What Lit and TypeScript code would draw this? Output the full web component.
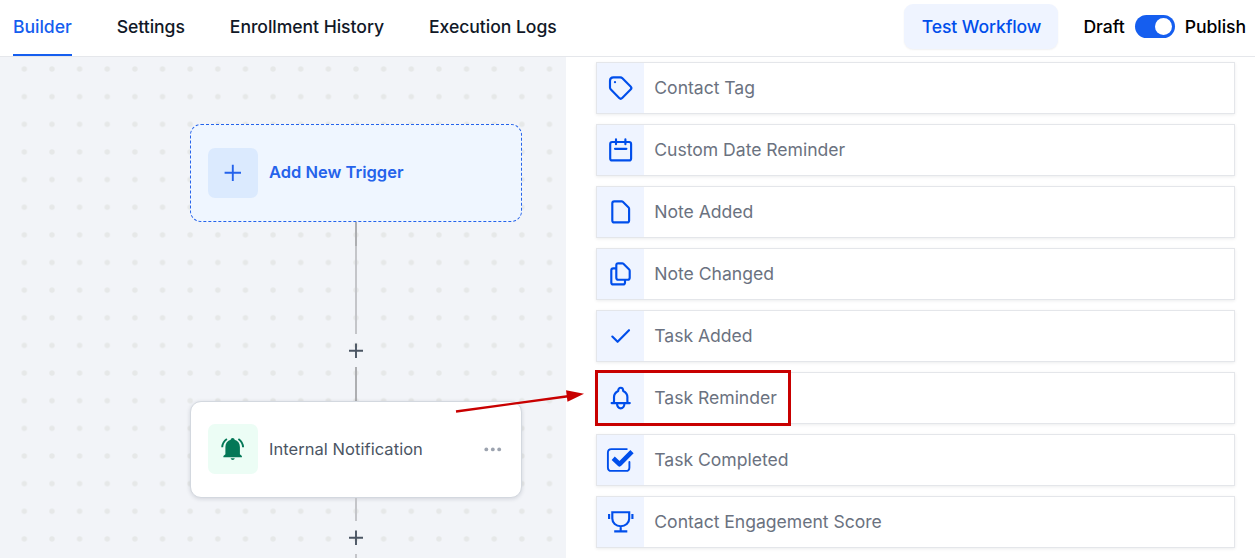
import { LitElement, html, svg, css } from "lit";
import { customElement, property } from "lit/decorators.js";

const ICONS: Record<string, unknown> = {
  tag: svg`<path d="M16.5 14.3H23.3q1.2 0 2.1.9L33.6 23.4q1.6 1.6 0 3.2L25.2 35q-1.5 1.5-3 0L13.9 26.6q-.9-.9-.9-2.1V17.8q0-3.5 3.5-3.5Z"/><circle cx="18" cy="19.2" r="1.1" fill="currentColor" stroke="none"/>`,
  calendar: svg`<rect x="13.2" y="17" width="20.9" height="18.4" rx="2"/><path d="M19 14.4V19.2M28.4 14.4V19.2M18 23.8H29.4"/>`,
  note: svg`<path d="M17.3 14.3H24.6q.7 0 1.2.5L31.6 20.5q.5.5.5 1.2V33.4q0 2-2 2H17.3q-2 0-2-2V16.3q0-2 2-2Z"/>`,
  copy: svg`<path d="M21.3 14.3H25.2q.7 0 1.2.5L32.2 20.5q.5.5.5 1.2V28.7q0 2-2 2H21.3q-2 0-2-2V16.3q0-2 2-2ZM19.3 19.3H16.3q-2 0-2 2V33.4q0 2 2 2H26q2 0 2-2V30.7"/>`,
  check: svg`<path d="M15.3 25.6L20.6 30.8L32 19.2"/>`,
  bell: svg`<path d="M14.6 30.1H32.8M16.7 30C17.3 28.5 17 26.5 17 24.2C17 20.8 19.2 18.8 21.2 17.9C21.2 16 22.2 14.7 23.7 14.7C25.2 14.7 26.2 16 26.2 17.9C28.2 18.8 30.4 20.8 30.4 24.2C30.4 26.5 30.1 28.5 30.7 30M20 30.8a3.7 4.5 0 0 0 7.4 0"/>`,
  done: svg`<path d="M29.8 14.1H14.4Q10.9 14.1 10.9 17.6V32.4Q10.9 35.9 14.4 35.9H29Q32.4 35.9 32.4 32.4V27" stroke-width="1.9"/><path d="M16.2 23.3L22.6 29.2L35 16.6" stroke-width="4.6" stroke-linecap="butt"/>`,
  trophy: svg`<path d="M15.3 15.2H32.2V21.5C32.2 26 28.5 29.2 23.7 29.2S15.3 26 15.3 21.5ZM23.7 29.2V34M17.2 34.3H30.3" stroke-linecap="butt" stroke-linejoin="miter"/><path d="M12.1 17V22M35.4 17V22" stroke-linecap="butt"/>`,
};

@customElement("trigger-row")
class TriggerRow extends LitElement {
  @property() icon = "";
  @property() label = "";
  static styles = css`
    :host { display: flex; height: 50px; border: 1px solid #e4e6ea; background: #fff; box-shadow: 0 1px 3px rgba(16, 24, 40, 0.08); }
    .icon { flex: none; width: 47px; height: 50px; background: #eff4ff; color: #004eeb; }
    .label { padding-left: 10.3px; line-height: 50px; font-size: 17.6px; letter-spacing: -0.03px; color: #6b7280; white-space: nowrap; }
    svg { display: block; fill: none; stroke: currentColor; stroke-width: 2.15; stroke-linecap: round; stroke-linejoin: round; }
  `;
  render() {
    return html`<div class="icon"><svg width="47" height="50" viewBox="0 0 47 50">${ICONS[this.icon]}</svg></div>
      <div class="label">${this.label}</div>`;
  }
}

@customElement("app-root")
class AppRoot extends LitElement {
  static styles = css`
    * { box-sizing: border-box; }
    :host { display: flex; flex-direction: column; position: relative; width: 1255px; height: 558px; overflow: hidden; background: #fff; font-family: Inter, sans-serif; font-size: 17.6px; }
    header { display: flex; align-items: flex-start; flex: none; height: 57px; border-bottom: 1px solid #e5e7eb; padding: 0 9px 0 13px; font-weight: 500; color: #111827; white-space: nowrap; }
    nav { display: flex; gap: 45px; flex: 1; }
    .tab { height: 56px; line-height: 54px; letter-spacing: -0.05px; }
    .tab.active { color: #155eef; border-bottom: 2px solid #155eef; }
    .test { margin-top: 4px; width: 154px; height: 45px; line-height: 45px; text-align: center; letter-spacing: -0.1px; border-radius: 9px; background: #eff4ff; color: #004eeb; box-shadow: 0 1px 2px rgba(16, 24, 40, 0.06); }
    .state { display: flex; align-items: center; height: 53px; margin-left: 25px; gap: 10px; color: #000; letter-spacing: -0.05px; }
    .toggle { display: flex; justify-content: flex-end; width: 40px; height: 23px; border-radius: 12px; background: #155eef; padding: 3px 2.5px; }
    .knob { width: 17px; height: 17px; border-radius: 50%; background: #fff; }
    main { display: flex; flex: 1; min-height: 0; }
    .canvas { display: grid; grid-template: 501px / 566px; width: 566px; background-color: #f2f4f8; overflow: hidden; }
    .canvas > * { grid-area: 1 / 1; }
    .dots { display: block; }
    .flow { display: flex; flex-direction: column; align-items: center; padding: 67px 44px 0 190px; }
    .card { display: flex; align-items: center; flex: none; width: 332px; padding: 0 17px; border-radius: 11px; white-space: nowrap; font-size: 16.5px; }
    .add { height: 98px; border: 1px dashed #2563eb; background: #eff6ff; color: #2563eb; font-weight: 600; }
    .action { height: 97px; border: 1px solid #d3d8df; background: #fff; color: #4b5563; padding: 0 19.5px 2px 17px; box-shadow: 0 1px 4px rgba(16, 24, 40, 0.14); letter-spacing: 0.05px; }
    .badge { flex: none; width: 50px; height: 50px; border-radius: 7px; margin-right: 11px; }
    .badge svg { display: block; }
    .blue { background: #dbeafe; }
    .green { background: #ecfdf5; }
    .name { flex: 1; }
    .add .name { padding-bottom: 3px; }
    .line { flex: none; width: 2px; background: #c4c5c9; }
    .dark { background: #adaeb1; }
    .plus { flex: none; display: block; }
    .list { flex: 1; display: flex; flex-direction: column; gap: 10px; padding: 5px 20px 0 30px; }
    trigger-row { flex: none; height: 52px; }
    .note { position: absolute; left: 0; top: 0; }
  `;
  render() {
    const plus = html`<svg class="plus" width="34" height="33" viewBox="0 0 34 33"><path d="M17 9.5V24M10 16.7H24" stroke="#4b5563" stroke-width="1.9" fill="none" /></svg>`;
    const rows = [
      ["tag", "Contact Tag"], ["calendar", "Custom Date Reminder"], ["note", "Note Added"], ["copy", "Note Changed"],
      ["check", "Task Added"], ["bell", "Task Reminder"], ["done", "Task Completed"], ["trophy", "Contact Engagement Score"],
    ];
    return html`
      <header>
        <nav>
          <div class="tab active">Builder</div>
          <div class="tab">Settings</div>
          <div class="tab">Enrollment History</div>
          <div class="tab">Execution Logs</div>
        </nav>
        <div class="test">Test Workflow</div>
        <div class="state"><span>Draft</span><div class="toggle"><div class="knob"></div></div><span>Publish</span></div>
      </header>
      <main>
        <div class="canvas">
          <svg class="dots" width="566" height="501">
            <defs><pattern id="grid" x="10.5" y="-1.8" width="27.64" height="27.64" patternUnits="userSpaceOnUse"><circle cx="13.82" cy="13.82" r="2.7" fill="#e6e8e8" /></pattern></defs>
            <rect width="566" height="501" fill="url(#grid)" />
          </svg>
          <div class="flow">
            <div class="card add">
              <div class="badge blue"><svg width="50" height="50"><path d="M24.8 16.7V33M16.6 24.8H33" stroke="#2563eb" stroke-width="1.9" /></svg></div>
              <div class="name">Add New Trigger</div>
            </div>
            <div class="line dark" style="height:24px"></div>
            <div class="line" style="height:88px"></div>
            ${plus}
            <div class="line dark" style="height:34px"></div>
            <div class="card action">
              <div class="badge green">
                <svg width="50" height="50" fill="#047857"><path d="M24.6 14c1.2 0 1.9.8 2 1.7c3.3.9 5.3 3.6 5.3 7.2v7.4l2 1.6v1.3H15.4v-1.3l2-1.6v-7.4c0-3.6 2-6.3 5.3-7.2c.1-.9.8-1.7 1.9-1.7ZM22.6 34.3h4.2q-.4 1.8-2.1 1.8t-2.1-1.8Z" /><path d="M14.2 23.2c.2-3.5 1.8-6.2 4.7-8.2M35.1 23.2c-.2-3.5-1.8-6.2-4.7-8.2" fill="none" stroke="#047857" stroke-width="1.9" /></svg>
              </div>
              <div class="name">Internal Notification</div>
              <svg width="18" height="6" fill="#9ca3af"><circle cx="2.3" cy="3.4" r="1.9" /><circle cx="8.8" cy="3.4" r="1.9" /><circle cx="15.2" cy="3.4" r="1.9" /></svg>
            </div>
            <div class="line" style="height:23px"></div>
            ${plus}
            <div class="line" style="height:10px"></div>
          </div>
        </div>
        <div class="list">${rows.map(([i, l]) => html`<trigger-row .icon=${i} .label=${l}></trigger-row>`)}</div>
      </main>
      <svg class="note" width="1255" height="558">
        <rect x="596.5" y="371.5" width="193" height="53" fill="none" stroke="#c80000" stroke-width="3" />
        <path d="M456 411.5L568 396.2" stroke="#c80000" stroke-width="2.4" />
        <path d="M566 390.3L584 393.8L567.5 401.7Z" fill="#c80000" />
      </svg>`;
  }
}
